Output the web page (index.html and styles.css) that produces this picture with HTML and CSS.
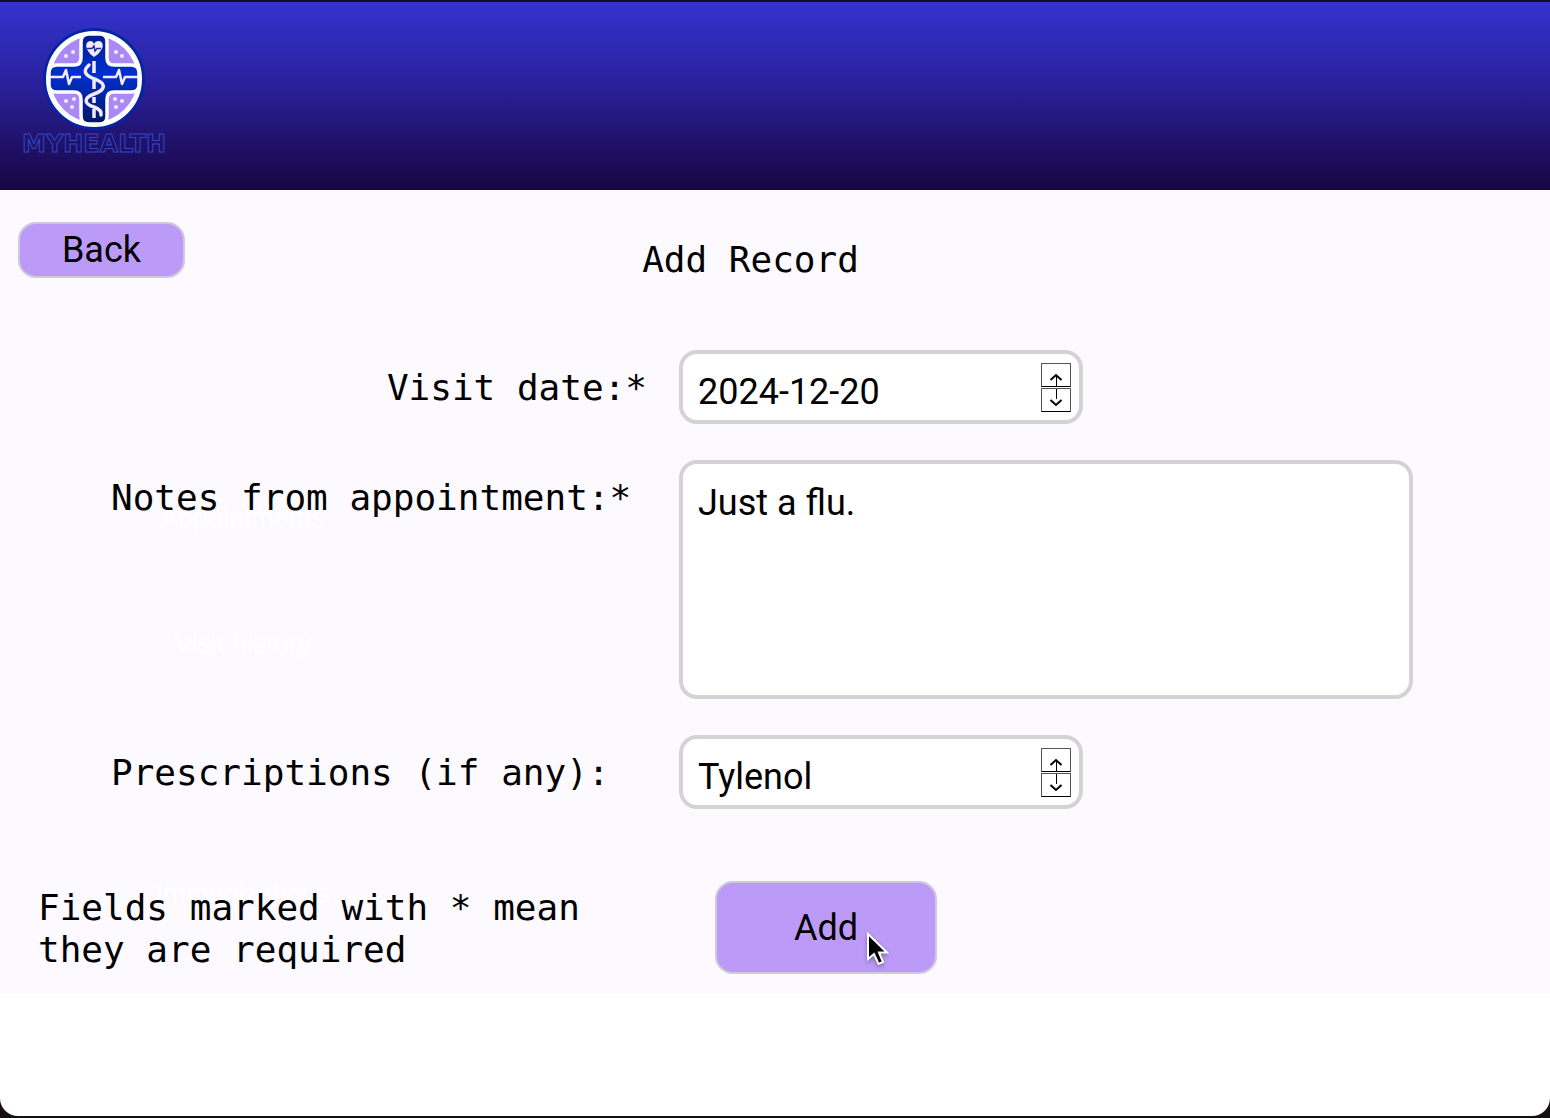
FILE: index.html
```html
<!DOCTYPE html>
<html lang="en">
<head>
<meta charset="utf-8">
<meta name="viewport" content="width=device-width, initial-scale=1">
<title>MyHealth - Add Record</title>
<link rel="stylesheet" href="styles.css">
</head>
<body>
<div class="window">
  <header class="banner">
    <div class="brand">
      <svg class="brand-mark" viewBox="0 0 104 104" aria-hidden="true">
        <defs>
          <linearGradient id="cross" x1="0" y1="0" x2="0" y2="1"><stop offset="0" stop-color="#001c92"/><stop offset=".45" stop-color="#0030d0"/><stop offset="1" stop-color="#001664"/></linearGradient>
        </defs>
        <circle cx="52" cy="52" r="51" fill="#0525a4"/>
        <circle cx="52" cy="52" r="45.500" fill="#a98af4" stroke="#fff" stroke-width="5"/>
        <path d="M47 7H58Q65 7 65 15V31Q65 38 72 38H89Q97 38 97 46V58Q97 65 89 65H72Q65 65 65 72V89Q65 97 58 97H47Q39 97 39 89V72Q39 65 32 65H15Q7 65 7 58V46Q7 38 15 38H32Q39 38 39 31V15Q39 7 47 7Z" fill="url(#cross)" stroke="#fff" stroke-width="3.500"/>
        <path d="M52 30C43 24 42 15 48 14Q51 14 52 17Q53 14 57 14C63 15 62 24 52 30Z" fill="#f3eaff"/>
        <path d="M45 21.500H50L52 19L53 24L55 21.500H59" fill="none" stroke="#1a2f9c" stroke-width="1.500"/>
        <path d="M8 50H21L24 43L27 57L30 50H39M61 50H74L77 43L80 57L83 50H96" fill="none" stroke="#f3eaff" stroke-width="2.500" stroke-linejoin="round"/>
        <path d="M52 34V46M52 53V62M52 70V76M52 82V91" stroke="#f3eaff" stroke-width="3.500"/>
        <path d="M47 38C38 46 47 50 55 53C66 58 61 64 52 67C41 71 42 77 52 80Q60 83 59 88" fill="none" stroke="#f3eaff" stroke-width="3.500" stroke-linecap="round"/>
        <g fill="#f3eaff"><circle cx="24" cy="29" r="2"/><circle cx="31" cy="25" r="2"/><circle cx="74" cy="25" r="2"/><circle cx="80" cy="29" r="2"/><circle cx="24" cy="74" r="2"/><circle cx="32" cy="72" r="2"/><circle cx="30" cy="80" r="2"/><circle cx="73" cy="72" r="2"/><circle cx="80" cy="74" r="2"/><circle cx="74" cy="80" r="2"/></g>
      </svg>
      <span class="brand-name">MYHEALTH</span>
    </div>
  </header>
  <main class="page">
    <div class="menu-layer" aria-hidden="true">
      <span class="ghost ghost-appointments">Appointments</span>
      <span class="ghost ghost-history">Visit history</span>
      <span class="ghost ghost-immunizations">Immunizations</span>
    </div>
    <div class="toolbar">
      <button class="button back" type="button">Back</button>
      <h1 class="title">Add Record</h1>
    </div>
    <form class="record-form">
      <label class="label label-end" for="visit-date">Visit date:*</label>
      <div class="field">
        <input class="text-input" id="visit-date" type="text" value="2024-12-20">
        <div class="spinner">
          <button class="step" type="button" aria-label="Next day"><svg viewBox="0 0 28 22" aria-hidden="true"><path d="M8.500 16L14 11L19.500 16" stroke-width="2"/><path d="M14.500 12V22" stroke-width="1"/></svg></button>
          <button class="step" type="button" aria-label="Previous day"><svg viewBox="0 0 28 22" aria-hidden="true"><path d="M8.500 11L14 16L19.500 11" stroke-width="2"/><path d="M14.500 0V10" stroke-width="1"/></svg></button>
        </div>
      </div>
      <label class="label" for="notes">Notes from appointment:*</label>
      <textarea class="notes" id="notes">Just a flu.</textarea>
      <label class="label" for="prescriptions">Prescriptions (if any):</label>
      <div class="field">
        <input class="text-input" id="prescriptions" type="text" value="Tylenol">
        <div class="spinner">
          <button class="step" type="button" aria-label="Previous prescription"><svg viewBox="0 0 28 22" aria-hidden="true"><path d="M8.500 16L14 11L19.500 16" stroke-width="2"/><path d="M14.500 12V22" stroke-width="1"/></svg></button>
          <button class="step" type="button" aria-label="Next prescription"><svg viewBox="0 0 28 22" aria-hidden="true"><path d="M8.500 11L14 16L19.500 11" stroke-width="2"/><path d="M14.500 0V10" stroke-width="1"/></svg></button>
        </div>
      </div>
      <p class="hint">Fields marked with * mean<br>they are required</p>
      <div class="submit">
        <button class="button add" type="button">Add</button>
        <svg class="pointer" viewBox="0 0 24 36" aria-hidden="true"><path d="M2 2V27L8 22L12.500 32L17 30L13 20.500H21Z" fill="#000" stroke="#fff" stroke-width="2"/></svg>
      </div>
    </form>
  </main>
</div>
</body>
</html>
```
FILE: styles.css
```css
* {
  box-sizing: border-box;
}

body {
  margin: 0;
  background: #15100f;
  color: #000;
  font-family: "DejaVu Sans Mono", monospace;
  font-size: 36px;
}

.window {
  min-height: calc(100vh - 2px);
  overflow: hidden;
  border-radius: 0 0 18px 18px;
  background: #fff;
}

.banner {
  display: flex;
  padding: 25px 22px 32px;
  border-top: 2px solid #101026;
  background: linear-gradient(#3333cf, #28209a 45%, #180541);
}

.brand {
  display: flex;
  flex-direction: column;
  align-items: center;
}

.brand-mark {
  width: 104px;
  height: 104px;
}

.brand-name {
  color: transparent;
  font-family: "DejaVu Sans", sans-serif;
  font-size: 24px;
  font-weight: 700;
  line-height: 27px;
  -webkit-text-stroke: 1px #3147c4;
}

.page {
  position: relative;
  padding: 32px 0 19px;
  background: #fcfaff;
}

.menu-layer {
  position: absolute;
  inset: 0;
  pointer-events: none;
}

.ghost {
  position: absolute;
  color: #fff;
  font-family: "Liberation Sans", Arial, sans-serif;
  font-size: 27px;
  line-height: 32px;
}

.ghost-appointments {
  top: 312px;
  left: 160px;
}

.ghost-history {
  top: 438px;
  left: 174px;
}

.ghost-immunizations {
  top: 688px;
  left: 156px;
}

.toolbar {
  position: relative;
  display: grid;
  grid-template-columns: 1fr auto 1fr;
  align-items: start;
  padding: 0 67px 0 18px;
}

.title {
  margin: 0;
  padding-top: 17px;
  font-size: 36px;
  font-weight: 400;
  line-height: 42px;
}

.button {
  border: 2px solid #d0c8dc;
  border-radius: 18px;
  background: #bc9bf8;
  color: #000;
  font-family: Roboto, sans-serif;
  font-size: 36px;
  line-height: 42px;
}

.back {
  width: 167px;
  height: 56px;
  padding: 0;
}

.record-form {
  position: relative;
  display: grid;
  grid-template-columns: 679px 1fr;
  row-gap: 36px;
  align-items: start;
  margin-top: 69px;
}

.label {
  padding-left: 111px;
  line-height: 76px;
  height: 74px;
}

.label-end {
  padding-right: 32px;
  text-align: right;
}

.field {
  display: flex;
  align-items: center;
  width: 404px;
  max-width: 100%;
  height: 74px;
  padding-right: 8px;
  border: 4px solid #d3d3d3;
  border-radius: 18px;
  background: #fff;
}

.text-input {
  flex: 1;
  min-width: 0;
  height: 66px;
  padding: 10px 0 0 15px;
  border: 0;
  outline: 0;
  background: none;
  color: #000;
  font-family: Roboto, sans-serif;
  font-size: 36px;
}

.spinner {
  display: flex;
  flex-direction: column;
  gap: 1px;
}

.step {
  display: block;
  width: 30px;
  height: 24px;
  padding: 0;
  border: 1px solid #555;
  border-bottom-color: #000;
  background: #fff;
}

.step svg {
  display: block;
  width: 28px;
  height: 22px;
  fill: none;
  stroke: #000;
}

.notes {
  width: 734px;
  max-width: 100%;
  height: 239px;
  padding: 18px 15px;
  border: 4px solid #d3d3d3;
  border-radius: 18px;
  outline: 0;
  background: #fff;
  color: #000;
  font-family: Roboto, sans-serif;
  font-size: 36px;
  line-height: 42px;
  resize: none;
}

.hint {
  align-self: center;
  margin: 38px 0 0;
  padding-left: 38px;
  line-height: 42px;
}

.submit {
  position: relative;
  justify-self: start;
  margin: 36px 0 0 36px;
}

.add {
  display: block;
  width: 222px;
  height: 93px;
}

.pointer {
  position: absolute;
  top: 51px;
  left: 151px;
  width: 24px;
  height: 36px;
  filter: drop-shadow(0 2px 2px #0005);
}
```
